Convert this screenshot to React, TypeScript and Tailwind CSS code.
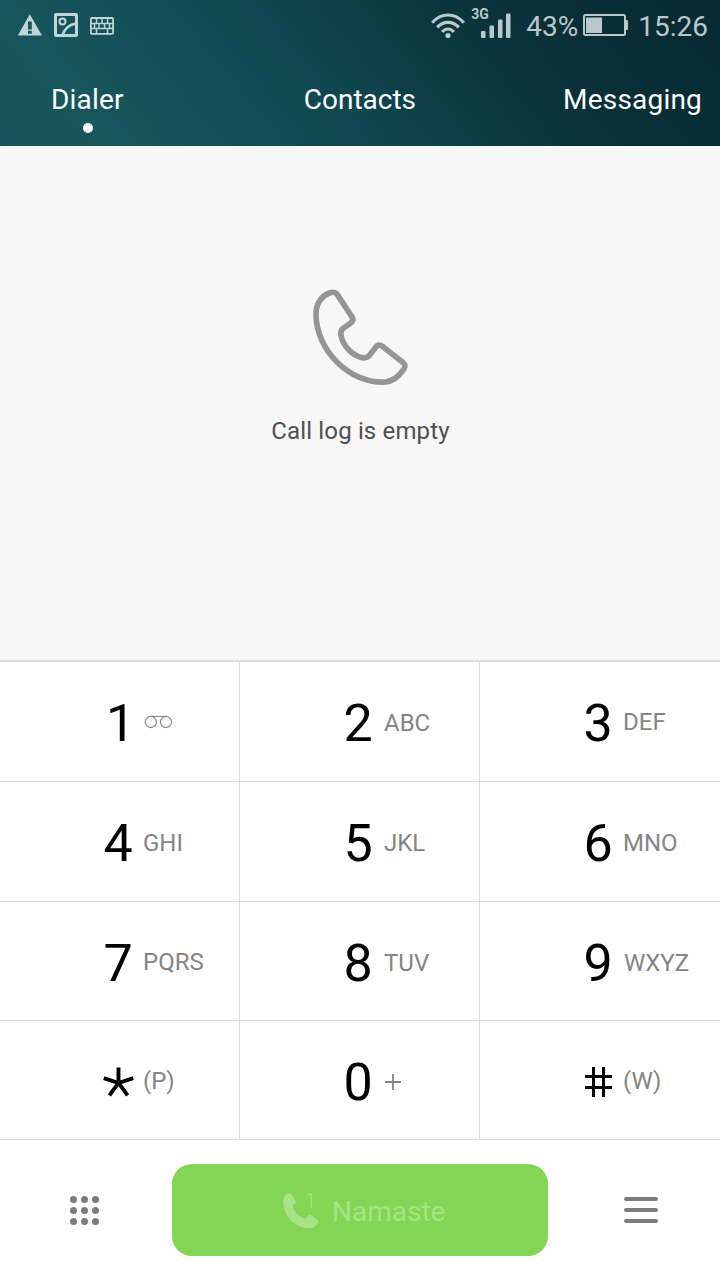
import { ReactNode } from "react";

type Key = { digit: ReactNode; sub: ReactNode; id: string; subClass?: string };

const Voicemail = () => (
  <svg className="w-[29px] h-[14px] ml-[1px]" viewBox="0 0 29 14" fill="none" stroke="#858585" strokeWidth="1.1">
    <circle cx="6.8" cy="7" r="5.6" />
    <circle cx="22" cy="7" r="5.6" />
    <path d="M6.8 1.4H22" />
  </svg>
);

const Star = () => (
  <svg aria-label="star" className="w-8 h-8 -mt-[2px] ml-[1px]" viewBox="0 0 32 32" fill="none" stroke="#000" strokeWidth="4">
    <path d="M16 17V1M16 17L.8 12M16 17L31.2 12M16 17L6.6 29.8M16 17L25.4 29.8" />
  </svg>
);

const Hash = () => (
  <svg aria-label="hash" className="w-8 h-8 -mt-[2px]" viewBox="0 0 32 32" fill="none" stroke="#000" strokeWidth="3">
    <path d="M11.500 1v30M21.500 1v30M3 10.500h27M3 21.500h27" />
  </svg>
);

const Plus = () => (
  <svg aria-label="plus" className="w-[18px] h-[18px]" viewBox="0 0 18 18" fill="none" stroke="#858585" strokeWidth="1.8">
    <path d="M9 1v16M1 9h16" />
  </svg>
);

const keys: Key[] = [
  { id: "1", digit: <span className="ml-[5px]">1</span>, sub: <Voicemail /> },
  { id: "2", digit: "2", sub: "ABC", subClass: "pt-[2px] pl-[1px]" },
  { id: "3", digit: "3", sub: "DEF" },
  { id: "4", digit: "4", sub: "GHI", subClass: "pt-[2px]" },
  { id: "5", digit: "5", sub: "JKL", subClass: "pt-[2px] pl-[1px]" },
  { id: "6", digit: "6", sub: "MNO", subClass: "pt-[2px]" },
  { id: "7", digit: "7", sub: "PQRS", subClass: "pt-[2px]" },
  { id: "8", digit: "8", sub: "TUV", subClass: "pt-[3px] pl-[1px]" },
  { id: "9", digit: "9", sub: "WXYZ", subClass: "pt-[3px] pl-[1px]" },
  { id: "star", digit: <Star />, sub: "(P)", subClass: "pt-[2px]" },
  { id: "0", digit: "0", sub: <Plus />, subClass: "pt-[3px] pl-[1px]" },
  { id: "hash", digit: <Hash />, sub: "(W)", subClass: "pt-[2px]" },
];

function StatusBar() {
  return (
    <div className="h-[51px] flex items-center justify-between pl-[17px] pr-[12px] text-[#b9c8ca]">
      <div className="flex items-center gap-3">
        <svg className="w-[25px] h-6" viewBox="0 0 25 24" fill="#c0d5d6">
          <path fillRule="evenodd" d="M12.8 .2L25 21.400H.8zM11 7.400v8h3.800v-8zM11 16.800v3h3.800v-3z" />
        </svg>
        <svg className="w-6 h-6 -mt-[2px]" viewBox="0 0 24 24" fill="none" stroke="#c0d5d6" strokeWidth="3">
          <rect x="1.5" y="1.5" width="21" height="21" rx=".5" />
          <circle cx="8.500" cy="8.500" r="3" strokeWidth="2" />
          <path d="M8.500 22C11 15 15 11.500 22 10.500" strokeWidth="2.500" />
        </svg>
        <svg className="w-6 h-[18px]" viewBox="0 0 24 18" fill="none" stroke="#c0d5d6" strokeWidth="1.500">
          <rect x=".9" y="1" width="22.200" height="15.800" rx="1" strokeWidth="1.800" />
          <path d="M1 6.500h22M1 11.500h22M6.500 1v5.500M12 1v5.500M17.500 1v5.500M4.500 6.500v5M9 6.500v5M14.500 6.500v5M19.500 6.500v5M6.500 11.500v5M17.500 11.500v5" />
        </svg>
      </div>
      <div className="flex items-center">
        <svg className="w-[34px] h-[26px]" viewBox="0 0 34 26" fill="none" stroke="#b9c8ca" strokeWidth="3.200">
          <path d="M1.200 9.800C10 -.6 24 -.6 32.800 9.800" />
          <path d="M6.200 14.400C12 7.600 22 7.600 27.800 14.400" />
          <path d="M11.200 19C14.500 15 19.500 15 22.800 19" />
          <circle cx="17" cy="22.500" r="2.600" fill="#b9c8ca" stroke="none" />
        </svg>
        <div className="relative ml-[16px] mr-[15px]">
          <span className="absolute -left-[10px] -top-[7px] text-[14px] leading-[16px] font-bold">3G</span>
          <svg className="w-[30px] h-[26px]" viewBox="0 0 30 26" fill="#b9c8ca">
            <rect x="0" y="18" width="4.500" height="7" rx="1" />
            <rect x="8.500" y="12.500" width="4.500" height="12.500" rx="1" />
            <rect x="17" y="6.500" width="4.500" height="18.500" rx="1" />
            <rect x="25" y=".5" width="4.500" height="24.500" rx="1" />
          </svg>
        </div>
        <span className="text-[28px] leading-[32px] pt-[2px]">43%</span>
        <svg className="w-[46px] h-6 ml-[5px] mr-[9px] -mt-[2px]" viewBox="0 0 46 24">
          <rect x="1" y="2" width="41" height="20" rx="1.500" fill="none" stroke="#b9c8ca" strokeWidth="2" />
          <rect x="3" y="4.500" width="16" height="15.500" fill="#b9c8ca" />
          <rect x="42" y="7" width="3" height="10" rx="1" fill="#b9c8ca" />
        </svg>
        <span className="text-[28px] leading-[32px] pt-[2px]">15:26</span>
      </div>
    </div>
  );
}

function Tabs() {
  return (
    <nav className="h-[95px] flex justify-between pl-[51px] pr-[18px] pt-[32px] text-[28px] leading-[34px] text-white">
      <div className="flex flex-col items-center">
        <span className="tracking-[0.2px]">Dialer</span>
        <span className="w-[10px] h-[10px] rounded-full bg-white mt-[6px] ml-[1px]" />
      </div>
      <span className="ml-[33px]">Contacts</span>
      <span className="tracking-[0.2px]">Messaging</span>
    </nav>
  );
}

export default function App() {
  return (
    <div className="w-[720px] h-[1280px] flex flex-col bg-white font-['Roboto',sans-serif] overflow-hidden">
      <header className="h-[146px] bg-[linear-gradient(50deg,#17535a_0%,#17565c_15%,#134e56_30%,#10464f_45%,#0b373f_64%,#092e36_80%,#082b33_100%)]">
        <StatusBar />
        <Tabs />
      </header>

      <main className="h-[514px] bg-[#f7f7f7] flex flex-col items-center pt-[141px]">
        <svg className="w-[100px] h-[100px]" viewBox="210 50 300 300" fill="none" stroke="#959595" strokeWidth="17" strokeLinejoin="round">
          <path d="M268 68C280 64 286 65 292 73L336 140C341 147 339 153 331 159L311 173C303 179 301 184 303 194C307 225 337 256 367 262C378 264 384 261 390 253L406 232C412 223 419 222 427 228L487 275C496 282 497 288 491 297C478 316 461 332 436 335C330 341 228 240 228 132C228 98 246 76 268 68Z" />
        </svg>
        <p className="mt-[28px] ml-[1px] text-[24px] leading-[32px] text-[#505050] tracking-[0.15px]">Call log is empty</p>
      </main>

      <div className="h-[480px] border-t-2 border-[#dedede] grid grid-cols-3 grid-rows-[120px_120px_119px_119px]">
        {keys.map((k) => (
          <button key={k.id} className="flex items-center pl-[102px] border-b border-r border-[#dcdcdc] nth-[3n]:border-r-0">
            <span className="w-8 flex justify-center text-[52px] leading-[60px] text-black pt-[5px]">{k.digit}</span>
            <span className={`ml-[9px] text-[24px] leading-[28px] text-[#858585] ${k.subClass ?? ""}`}>{k.sub}</span>
          </button>
        ))}
      </div>

      <footer className="h-[140px] flex items-center justify-between pl-[70px] pr-[62px]">
        <div className="grid grid-cols-3 gap-1">
          {Array.from({ length: 9 }, (_, i) => (
            <span key={i} className="w-[7px] h-[7px] rounded-full bg-[#7c7c7c]" />
          ))}
        </div>
        <button className="w-[376px] h-[92px] rounded-[20px] bg-[#82d653] text-[#a8e387] flex items-center pl-[111px] mr-[3px]">
          <div className="relative w-9 h-9 mt-[2px]">
            <svg className="w-9 h-9" viewBox="0 0 36 36" fill="currentColor">
              <path d="M4.500 .7C6.500 0 7.500 .3 8.500 1.700L12.700 8C13.300 9 13.100 9.700 12.300 10.400L10.500 12C9.700 12.700 9.600 13.400 10 14.500C12 20 16 23.500 21 25.300C22.300 25.700 23 25.400 23.800 24.500L25.500 22.300C26.300 21.300 27 21.200 28 21.900L34.500 27C35.400 27.800 35.500 28.600 34.900 29.700C33 33 30.500 35 27 35.200C13 35.800 .3 23 .1 8.500C.1 4.500 1.500 2 4.500 .7Z" />
            </svg>
            <span className="absolute left-[22px] -top-[2px] text-[20px] leading-[20px] font-light">1</span>
          </div>
          <span className="ml-[13px] pt-[3px] text-[28px] leading-[34px]">Namaste</span>
        </button>
        <div className="flex flex-col gap-[7px]">
          <span className="w-[34px] h-1 rounded-full bg-[#7c7c7c]" />
          <span className="w-[34px] h-1 rounded-full bg-[#7c7c7c]" />
          <span className="w-[34px] h-1 rounded-full bg-[#7c7c7c]" />
        </div>
      </footer>
    </div>
  );
}
